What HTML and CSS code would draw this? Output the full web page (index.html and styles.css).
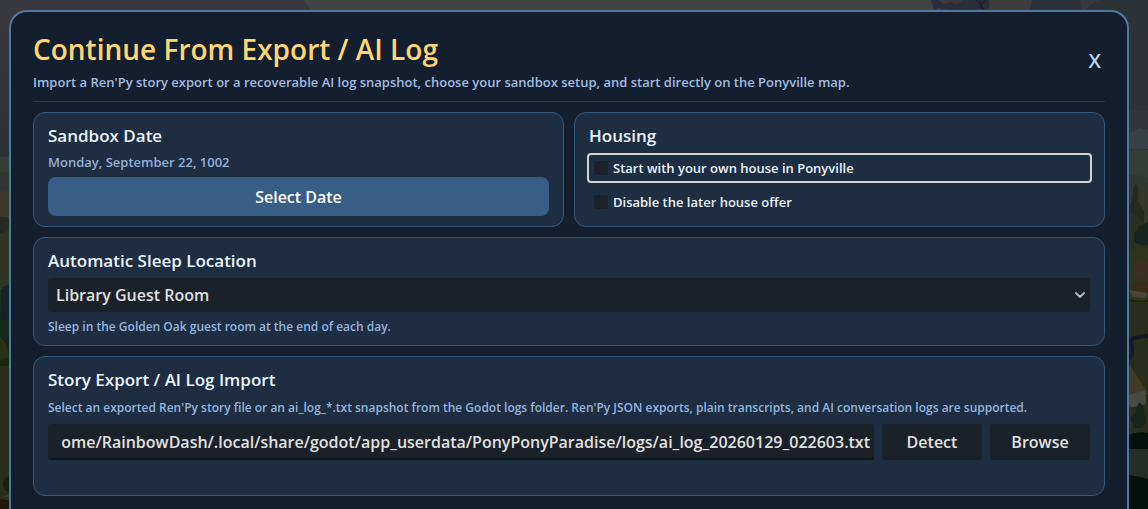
FILE: index.html
```html
<!DOCTYPE html>
<html lang="en">
<head>
  <meta charset="UTF-8">
  <meta name="viewport" content="width=device-width, initial-scale=1">
  <title>Continue From Export / AI Log</title>
  <link rel="stylesheet" href="styles.css">
</head>
<body>
  <!-- Dimmed Ponyville map behind the dialog -->
  <svg class="scene" viewBox="0 0 1148 509" preserveAspectRatio="none" aria-hidden="true">
    <defs>
      <linearGradient id="sky" x1="0" y1="0" x2="0" y2="1">
        <stop offset="0" stop-color="#38393e"/>
        <stop offset="1" stop-color="#2d313a"/>
      </linearGradient>
    </defs>
    <rect width="1148" height="509" fill="#282e1b"/>
    <rect width="1148" height="160" fill="url(#sky)"/>
    <!-- top edge -->
    <path d="M304 0H940V12H312Z" fill="#414444"/>
    <path d="M931 0h8l4 4 8-2 6 3 6-5h26v8l-12 2H950l-10-2-6 2Z" fill="#2a2e3b"/>
    <path d="M976 0l8 10M980 0l2 9M985 0l-6 8" stroke="#1a1f2a" stroke-width="1"/>
    <path d="M990 0h42l-2 12H990Z" fill="#3a3c3e"/>
    <path d="M1032 0h48l2 12H1030Z" fill="#2d313a"/>
    <path d="M1084 12Q1092 2 1100 0H1148V140H1120Z" fill="#2d3236"/>
    <!-- left edge -->
    <rect y="157" width="12" height="34" fill="#343d39"/>
    <path d="M0 172h12v20H0Z" fill="#30382f"/>
    <path d="M0 190q6 0 12 4v30H0Z" fill="#3b3a28"/>
    <path d="M0 217q6-1 12 3v14L0 234Z" fill="#262b21"/>
    <path d="M0 234l12-5v60H0Z" fill="#2f3521"/>
    <path d="M1 290q4-6 11-5v40H0Z" fill="#0f2529"/>
    <path d="M0 320h12v28H0Z" fill="#142c22"/>
    <path d="M4 343l8-10v14Z" fill="#20261a"/>
    <path d="M0 337q8 4 12 12v17H0Z" fill="#19270f"/>
    <path d="M0 337q7 4 9 20l-9 3Z" fill="#2b3119"/>
    <ellipse cx="10" cy="484" rx="7" ry="8" fill="#152013"/>
    <path d="M2 497l10-4v4Z" fill="#3a3b2f"/>
    <path d="M0 499q6 0 12 4v6H0Z" fill="#21170d"/>
    <!-- right edge -->
    <path d="M1120 110H1148V136H1120Z" fill="#30363c"/>
    <path d="M1128 134l6-3 6-3 4 2 4-1v20H1120v-14Z" fill="#374044"/>
    <path d="M1120 152q15-4 28-2v40H1120Z" fill="#353d39"/>
    <path d="M1120 176q14-4 28 2v14H1120Z" fill="#30382f"/>
    <path d="M1120 190h28v34h-28Z" fill="#35372a"/>
    <path d="M1128 208l4-7q2-20 5-16 2 4 1 16l6 10v20h-16Z" fill="#252b20"/>
    <path d="M1120 210q18 0 28 20v25H1120Z" fill="#2b3122"/>
    <path d="M1148 222l-9 4-5 8v8l10 4 4-2Z" fill="#14261d"/>
    <path d="M1120 255q14-8 28-7v55H1120Z" fill="#2d3419"/>
    <path d="M1134 268l5-6h9v18l-14-2Z" fill="#3b301f"/>
    <path d="M1130 289l5-7h13v10Z" fill="#3a2a17"/>
    <path d="M1129 290l18 3v5l-14-1Z" fill="#4b4439"/>
    <path d="M1128 298q10 4 20 2v2h-20Z" fill="#1c2313"/>
    <path d="M1128 342q4-5 20-6M1129 359q6-8 1-18" stroke="#171a20" stroke-width="4" fill="none"/>
    <path d="M1120 365h10l18 29-20 8Z" fill="#403b22"/>
    <path d="M1128 395l18-5v14l-18 4Z" fill="#4a4941"/>
    <path d="M1130 405v22M1128 410h4M1146 402v24" stroke="#3c2c1b" stroke-width="1"/>
    <path d="M1139 402q8 6 7 20l-4 6h-8l-4-10 5-5Z" fill="#18251c"/>
    <path d="M1120 438q18-8 28-5v18H1120Z" fill="#03120d"/>
    <rect x="1120" y="449" width="28" height="32" fill="#252f28"/>
    <path d="M1120 474q18 2 28 5v30H1120Z" fill="#02110c"/>
  </svg>

  <main class="dialog">
    <header class="dialog-header">
      <div class="dialog-heading">
        <h1>Continue From Export / AI Log</h1>
        <p>Import a Ren'Py story export or a recoverable AI log snapshot, choose your sandbox setup, and start directly on the Ponyville map.</p>
      </div>
      <button type="button" class="close">X</button>
    </header>

    <form class="cards">
      <div class="card-row">
        <section class="card">
          <h2>Sandbox Date</h2>
          <p class="date">Monday, September 22, 1002</p>
          <button type="button" class="primary">Select Date</button>
        </section>

        <section class="card">
          <h2>Housing</h2>
          <div class="checks">
            <label class="check focused"><input type="checkbox" id="ownHouse">Start with your own house in Ponyville</label>
            <label class="check"><input type="checkbox" id="noOffer">Disable the later house offer</label>
          </div>
        </section>
      </div>

      <section class="card">
        <h2><label for="sleepLocation">Automatic Sleep Location</label></h2>
        <div class="select-wrap">
          <select id="sleepLocation">
            <option>Library Guest Room</option>
          </select>
          <svg class="chevron" width="12" height="8" viewBox="0 0 12 8" aria-hidden="true">
            <path d="M2 2l4 4 4-4" fill="none" stroke="#b4b6b9" stroke-width="2" stroke-linecap="round" stroke-linejoin="round"/>
          </svg>
        </div>
        <p class="hint">Sleep in the Golden Oak guest room at the end of each day.</p>
      </section>

      <section class="card import">
        <h2><label for="logPath">Story Export / AI Log Import</label></h2>
        <p class="hint">Select an exported Ren'Py story file or an ai_log_*.txt snapshot from the Godot logs folder. Ren'Py JSON exports, plain transcripts, and AI conversation logs are supported.</p>
        <div class="path-row">
          <input type="text" id="logPath" value="ome/RainbowDash/.local/share/godot/app_userdata/PonyPonyParadise/logs/ai_log_20260129_022603.txt">
          <button type="button">Detect</button>
          <button type="button">Browse</button>
        </div>
      </section>
    </form>
  </main>
</body>
</html>
```
FILE: styles.css
```css
* {
  box-sizing: border-box;
}
body {
  display: flex;
  flex-direction: column;
  margin: 0;
  height: 100vh;
  overflow: hidden;
  background-color: #282e1b;
  font-family: "Open Sans", "Noto Sans", sans-serif;
  font-weight: 600;
  color: #e0e0e0;
}
h1, h2, p {
  margin: 0;
}
button, input, select {
  font: inherit;
  color: inherit;
  border: none;
}
button {
  cursor: pointer;
}
.scene {
  position: absolute;
  inset: 0;
  width: 100%;
  height: 100%;
  z-index: -1;
}
.dialog {
  flex: 1;
  margin: 10px 19px 0 9px;
  padding: 18px 22px 0;
  border: 2px solid #4f799f;
  border-bottom: none;
  border-radius: 18px 18px 0 0;
  background-color: #131f2e;
}
.dialog-header {
  display: flex;
  align-items: center;
  justify-content: space-between;
  padding-bottom: 9px;
  border-bottom: 1px solid #2b3846;
}
h1 {
  font-size: 28px;
  line-height: 38px;
  font-weight: 600;
  color: #ffd670;
}
.dialog-heading p {
  font-size: 13px;
  line-height: 20px;
  margin-top: 4px;
  color: #a0bce0;
}
.close {
  padding: 0 4px;
  background: none;
  font-size: 20px;
  line-height: 28px;
  color: #b3d1f2;
}
.cards {
  display: flex;
  flex-direction: column;
  gap: 10px;
  padding-top: 10px;
}
.card-row {
  display: grid;
  grid-template-columns: 1fr 1fr;
  gap: 10px;
}
.card {
  padding: 10px 14px 9px;
  border: 1px solid #33587a;
  border-radius: 12px;
  background-color: #1d2d42;
}
.import {
  padding-bottom: 35px;
}
h2 {
  font-size: 17px;
  line-height: 26px;
  font-weight: 600;
  color: #ebf5ff;
}
.date {
  font-size: 13px;
  line-height: 18px;
  margin: 4px 0 6px;
  color: #94b0d6;
}
.primary {
  display: block;
  width: 100%;
  height: 39px;
  border-radius: 8px;
  background-color: #385e87;
  font-size: 16px;
  color: #fff;
}
.checks {
  display: flex;
  flex-direction: column;
  gap: 4px;
  margin: 4px -2px 0;
}
.check {
  display: flex;
  align-items: center;
  gap: 5px;
  height: 30px;
  padding: 0 5px;
  border: 2px solid transparent;
  border-radius: 4px;
  font-size: 13px;
  color: #ebf5ff;
}
.focused {
  border-color: #d4d1d3;
}
.check input {
  appearance: none;
  width: 14px;
  height: 14px;
  margin: 0;
  border-radius: 2px;
  background-color: #1c222b;
}
.select-wrap {
  position: relative;
  margin: 4px 0 6px;
}
.select-wrap select {
  display: block;
  appearance: none;
  width: 100%;
  height: 34px;
  padding: 0 8px;
  border-radius: 3px;
  background-color: #1b2129;
  font-size: 16px;
}
.chevron {
  position: absolute;
  right: 4px;
  top: 13px;
}
.hint {
  font-size: 12px;
  line-height: 18px;
  color: #94b5de;
}
.import .hint {
  margin: 6px 0 7px;
}
.path-row {
  display: flex;
  gap: 8px;
}
.path-row input,
.path-row button {
  height: 36px;
  border-radius: 3px;
  background-color: #1b2129;
  font-size: 16px;
}
.path-row input {
  flex: 1;
  min-width: 0;
  padding: 2px 4px 0;
  border-bottom: 2px solid #10151b;
  text-align: right;
}
.path-row button {
  width: 100px;
}
```
